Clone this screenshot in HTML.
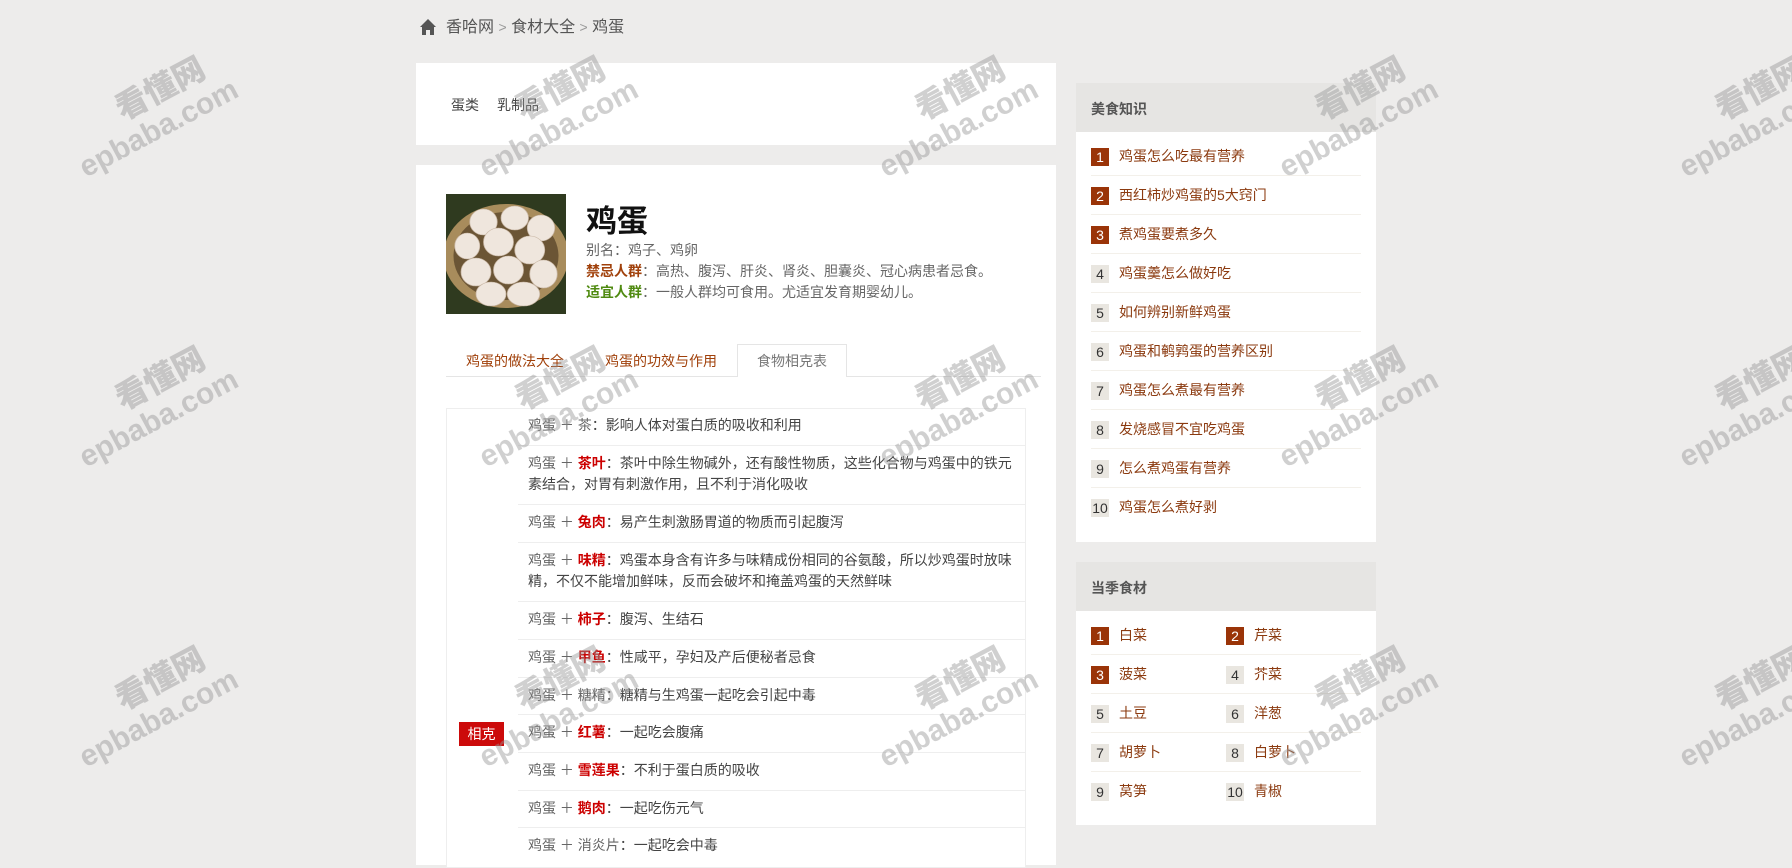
<!DOCTYPE html>
<html><head><meta charset="utf-8"><style>
*{margin:0;padding:0;box-sizing:border-box}
body{width:1792px;height:856px;background:#edeceb;font-family:"Liberation Sans","Noto Sans CJK SC",sans-serif;position:relative;overflow:hidden;color:#333}
.a{position:absolute}
.card{position:absolute;background:#fff}
.bc{top:16px;font-size:16px;color:#555;line-height:22px}
.bc span{color:#999;font-size:14px}
.row{position:absolute;left:518px;width:507px;border-top:1px solid #eee;font-size:14px;line-height:21px;padding:7px 10px 0 10px;color:#444}
.row .f{color:#666}
.row .r{color:#c00;font-weight:bold}
.row .n{color:#666}
.side .it{position:absolute;left:15px;width:270px;height:39px;border-bottom:1px solid #f3f0ea;font-size:14px;color:#8b3a0f}
.num{position:absolute;top:11px;width:18px;height:18px;line-height:18px;text-align:center;font-size:14px;background:#e9e6e0;color:#333}
.num.h{background:#9a3408;color:#fff}
.it .t{position:absolute;left:28px;top:9px;line-height:20px}
.hd{position:absolute;left:0;top:0;width:300px;height:49px;background:#e6e5e3;font-size:14px;color:#555;padding:16px 0 0 15px;font-weight:bold}
.wm{position:absolute;transform:rotate(-28deg);color:rgba(150,150,150,.45);font-weight:bold;text-align:center;line-height:1}
.wm b{display:block;font-size:32px;margin-left:40px}
.wm i{display:block;font-style:normal;font-size:30px;margin-top:4px}
</style></head><body>
<svg class="a" style="left:419px;top:18px" width="18" height="18" viewBox="0 0 18 18"><path d="M9 1 L1 9 L3 9 L3 17 L7 17 L7 12 L11 12 L11 17 L15 17 L15 9 L17 9 Z" fill="#555"/></svg>
<div class="a bc" style="left:446px">香哈网 <span>&gt;</span> 食材大全 <span>&gt;</span> 鸡蛋</div>

<div class="card" style="left:416px;top:63px;width:640px;height:82px">
<div class="a" style="left:35px;top:32px;font-size:14px;color:#444">蛋类</div>
<div class="a" style="left:81px;top:32px;font-size:14px;color:#444">乳制品</div>
</div>

<div class="card" style="left:416px;top:165px;width:640px;height:700px">
<svg class="a" style="left:30px;top:29px" width="120" height="120" viewBox="0 0 96 120" preserveAspectRatio="none">
<rect width="96" height="120" fill="#2f3a1f"/>
<ellipse cx="48" cy="62" rx="50" ry="52" fill="#a88c5c"/>
<ellipse cx="48" cy="62" rx="42" ry="44" fill="#6b5535"/>
<g fill="#efe6dd" stroke="#c9b7a5" stroke-width=".6">
<ellipse cx="30" cy="28" rx="11" ry="13"/><ellipse cx="55" cy="24" rx="11" ry="12"/><ellipse cx="76" cy="34" rx="11" ry="13"/>
<ellipse cx="17" cy="52" rx="10" ry="13"/><ellipse cx="42" cy="48" rx="12" ry="14"/><ellipse cx="67" cy="56" rx="12" ry="14"/>
<ellipse cx="24" cy="78" rx="12" ry="14"/><ellipse cx="50" cy="76" rx="12" ry="14"/><ellipse cx="78" cy="80" rx="11" ry="14"/>
<ellipse cx="36" cy="100" rx="12" ry="12"/><ellipse cx="62" cy="100" rx="13" ry="12"/></g></svg>
<div class="a" style="left:170px;top:31px;font-size:31px;font-weight:bold;color:#111">鸡蛋</div>
<div class="a" style="left:170px;top:75px;font-size:14px;line-height:21px;color:#666">别名：鸡子、鸡卵<br><b style="color:#a0400a">禁忌人群</b>：高热、腹泻、肝炎、肾炎、胆囊炎、冠心病患者忌食。<br><b style="color:#4f8a10">适宜人群</b>：一般人群均可食用。尤适宜发育期婴幼儿。</div>
<div class="a" style="left:30px;top:211px;width:595px;border-bottom:1px solid #e5e5e5;height:1px"></div>
<div class="a" style="left:50px;top:186px;font-size:14px;color:#a0400a">鸡蛋的做法大全</div>
<div class="a" style="left:189px;top:186px;font-size:14px;color:#a0400a">鸡蛋的功效与作用</div>
<div class="a" style="left:321px;top:179px;width:110px;height:33px;border:1px solid #e5e5e5;border-bottom:none;background:#fff;text-align:center;font-size:14px;line-height:32px;color:#777">食物相克表</div>
</div>

<div class="a" style="left:446px;top:408px;width:580px;height:460px;border:1px solid #eee;background:#fff"></div>
<div class="a" style="left:459px;top:722px;width:45px;height:24px;background:#cc0a0a;color:#fff;font-size:14px;text-align:center;line-height:24px">相克</div>
<div class="row" style="top:408px;height:37px;border-top:none"><span class="f">鸡蛋 ＋ </span><span class="n">茶</span>：影响人体对蛋白质的吸收和利用</div>
<div class="row" style="top:445px;height:59px"><span class="f">鸡蛋 ＋ </span><span class="r">茶叶</span>：茶叶中除生物碱外，还有酸性物质，这些化合物与鸡蛋中的铁元素结合，对胃有刺激作用，且不利于消化吸收</div>
<div class="row" style="top:504px;height:38px"><span class="f">鸡蛋 ＋ </span><span class="r">兔肉</span>：易产生刺激肠胃道的物质而引起腹泻</div>
<div class="row" style="top:542px;height:59px"><span class="f">鸡蛋 ＋ </span><span class="r">味精</span>：鸡蛋本身含有许多与味精成份相同的谷氨酸，所以炒鸡蛋时放味精，不仅不能增加鲜味，反而会破坏和掩盖鸡蛋的天然鲜味</div>
<div class="row" style="top:601px;height:38px"><span class="f">鸡蛋 ＋ </span><span class="r">柿子</span>：腹泻、生结石</div>
<div class="row" style="top:639px;height:38px"><span class="f">鸡蛋 ＋ </span><span class="r">甲鱼</span>：性咸平，孕妇及产后便秘者忌食</div>
<div class="row" style="top:677px;height:37px"><span class="f">鸡蛋 ＋ </span><span class="n">糖精</span>：糖精与生鸡蛋一起吃会引起中毒</div>
<div class="row" style="top:714px;height:38px"><span class="f">鸡蛋 ＋ </span><span class="r">红薯</span>：一起吃会腹痛</div>
<div class="row" style="top:752px;height:38px"><span class="f">鸡蛋 ＋ </span><span class="r">雪莲果</span>：不利于蛋白质的吸收</div>
<div class="row" style="top:790px;height:37px"><span class="f">鸡蛋 ＋ </span><span class="r">鹅肉</span>：一起吃伤元气</div>
<div class="row" style="top:827px;height:38px"><span class="f">鸡蛋 ＋ </span><span class="n">消炎片</span>：一起吃会中毒</div>

<div class="card side" style="left:1076px;top:83px;width:300px;height:459px">
<div class="hd">美食知识</div>
<div class="it" style="top:54px"><div class="num h">1</div><div class="t">鸡蛋怎么吃最有营养</div></div>
<div class="it" style="top:93px"><div class="num h">2</div><div class="t">西红柿炒鸡蛋的5大窍门</div></div>
<div class="it" style="top:132px"><div class="num h">3</div><div class="t">煮鸡蛋要煮多久</div></div>
<div class="it" style="top:171px"><div class="num">4</div><div class="t">鸡蛋羹怎么做好吃</div></div>
<div class="it" style="top:210px"><div class="num">5</div><div class="t">如何辨别新鲜鸡蛋</div></div>
<div class="it" style="top:249px"><div class="num">6</div><div class="t">鸡蛋和鹌鹑蛋的营养区别</div></div>
<div class="it" style="top:288px"><div class="num">7</div><div class="t">鸡蛋怎么煮最有营养</div></div>
<div class="it" style="top:327px"><div class="num">8</div><div class="t">发烧感冒不宜吃鸡蛋</div></div>
<div class="it" style="top:366px"><div class="num">9</div><div class="t">怎么煮鸡蛋有营养</div></div>
<div class="it" style="top:405px;border:none"><div class="num">10</div><div class="t">鸡蛋怎么煮好剥</div></div>
</div>

<div class="card side" style="left:1076px;top:562px;width:300px;height:263px">
<div class="hd">当季食材</div>
<div class="it" style="top:54px"><div class="num h">1</div><div class="t">白菜</div><div class="num h" style="left:135px">2</div><div class="t" style="left:163px">芹菜</div></div>
<div class="it" style="top:93px"><div class="num h">3</div><div class="t">菠菜</div><div class="num" style="left:135px">4</div><div class="t" style="left:163px">芥菜</div></div>
<div class="it" style="top:132px"><div class="num">5</div><div class="t">土豆</div><div class="num" style="left:135px">6</div><div class="t" style="left:163px">洋葱</div></div>
<div class="it" style="top:171px"><div class="num">7</div><div class="t">胡萝卜</div><div class="num" style="left:135px">8</div><div class="t" style="left:163px">白萝卜</div></div>
<div class="it" style="top:210px;border:none"><div class="num">9</div><div class="t">莴笋</div><div class="num" style="left:135px">10</div><div class="t" style="left:163px">青椒</div></div>
</div>

<div class="wm" style="left:63px;top:80px"><b>看懂网</b><i>epbaba.com</i></div>
<div class="wm" style="left:463px;top:80px"><b>看懂网</b><i>epbaba.com</i></div>
<div class="wm" style="left:863px;top:80px"><b>看懂网</b><i>epbaba.com</i></div>
<div class="wm" style="left:1263px;top:80px"><b>看懂网</b><i>epbaba.com</i></div>
<div class="wm" style="left:1663px;top:80px"><b>看懂网</b><i>epbaba.com</i></div>
<div class="wm" style="left:63px;top:370px"><b>看懂网</b><i>epbaba.com</i></div>
<div class="wm" style="left:463px;top:370px"><b>看懂网</b><i>epbaba.com</i></div>
<div class="wm" style="left:863px;top:370px"><b>看懂网</b><i>epbaba.com</i></div>
<div class="wm" style="left:1263px;top:370px"><b>看懂网</b><i>epbaba.com</i></div>
<div class="wm" style="left:1663px;top:370px"><b>看懂网</b><i>epbaba.com</i></div>
<div class="wm" style="left:63px;top:670px"><b>看懂网</b><i>epbaba.com</i></div>
<div class="wm" style="left:463px;top:670px"><b>看懂网</b><i>epbaba.com</i></div>
<div class="wm" style="left:863px;top:670px"><b>看懂网</b><i>epbaba.com</i></div>
<div class="wm" style="left:1263px;top:670px"><b>看懂网</b><i>epbaba.com</i></div>
<div class="wm" style="left:1663px;top:670px"><b>看懂网</b><i>epbaba.com</i></div>
</body></html>
